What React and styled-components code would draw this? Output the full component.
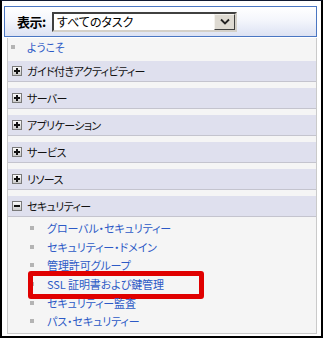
import React from "react";
import styled, { createGlobalStyle } from "styled-components";

const Global = createGlobalStyle`
  html, body { margin: 0; padding: 0; background: #fff; }
  body { font-family: "Noto Sans CJK JP", "Noto Sans", sans-serif; }
  * { box-sizing: border-box; }
`;

const Frame = styled.div`
  width: 323px;
  height: 338px;
  border: 2px solid #000;
  border-top: 1px solid #101a33;
  background: #fff;
  display: flex;
  flex-direction: column;
`;

const Header = styled.div`
  margin: 5px 4px 0 2px;
  height: 31px;
  border: 1px solid #4a76c2;
  background: linear-gradient(#ffffff 0%, #f4f6fc 45%, #dce2f3 100%);
  display: flex;
  align-items: center;
  padding-left: 12px;
`;

const Label = styled.span`
  font-size: 13px;
  font-weight: bold;
  color: #000;
  width: 35px;
  letter-spacing: -0.5px;
`;

const Select = styled.div`
  width: 185px;
  height: 20px;
  border-style: solid;
  border-width: 2px;
  border-color: #404040 #d4d0c8 #d4d0c8 #404040;
  background: #fff;
  display: flex;
  align-items: center;
  justify-content: space-between;
  padding-left: 3px;
  font-size: 12px;
  font-feature-settings: "palt";
  color: #000;
`;

const DropButton = styled.div`
  width: 21px;
  height: 16px;
  background: #dedad2;
  border-style: solid;
  border-width: 1px;
  border-color: #f4f2ee #404040 #404040 #f4f2ee;
  display: flex;
  align-items: center;
  justify-content: center;
`;

const Panel = styled.div`
  margin: 1px 4px 2px 5px;
  flex: 1;
  background: #f5f5f5;
  border: 1px solid #cacaca;
  border-top: none;
  display: flex;
  flex-direction: column;
`;

const LinkItem = styled.div`
  position: relative;
  height: ${(p) => p.$h}px;
  display: flex;
  align-items: center;
  padding-left: ${(p) => p.$indent}px;
  font-size: 11px;
  font-feature-settings: "palt";
  color: #2d5ac6;
  letter-spacing: -0.1px;
  white-space: nowrap;
`;

const Bullet = styled.span`
  width: 4px;
  height: 4px;
  background: #b4b4b4;
  margin-right: ${(p) => p.$gap}px;
  flex: none;
`;

const Rows = styled.div`
  margin-top: 5px;
  display: flex;
  flex-direction: column;
  gap: 6px;
`;

const Row = styled.div`
  height: 21px;
  background: #dfe0ee;
  border-bottom: 1px solid #c4c4ce;
  display: flex;
  align-items: center;
  padding-left: 4px;
  font-size: 11px;
  font-feature-settings: "palt";
  color: #111;
  letter-spacing: -0.6px;
  white-space: nowrap;
`;

const Toggle = styled.svg`
  width: 10px;
  height: 10px;
  margin-right: 5px;
  flex: none;
`;

const SubList = styled.div`
  margin-top: 1.6px;
  display: flex;
  flex-direction: column;
`;

const Highlight = styled.div`
  position: absolute;
  left: 20px;
  top: -4px;
  width: 176px;
  height: 28px;
  border: 5px solid #e00000;
  border-radius: 3px;
  pointer-events: none;
`;

function ToggleIcon({ open }) {
  return (
    <Toggle viewBox="0 0 10 10">
      <defs>
        <linearGradient id="tg" x1="0" y1="0" x2="0" y2="1">
          <stop offset="0" stopColor="#ffffff" />
          <stop offset="1" stopColor="#c8c8c8" />
        </linearGradient>
      </defs>
      <rect x="0.5" y="0.5" width="9" height="9" fill="url(#tg)" stroke="#7a7a7a" />
      <rect x="2" y="4" width="6" height="2" fill="#111" />
      {!open && <rect x="4" y="2" width="2" height="6" fill="#111" />}
    </Toggle>
  );
}

const sections = [
  "ガイド付きアクティビティー",
  "サーバー",
  "アプリケーション",
  "サービス",
  "リソース",
];

const security = [
  "グローバル・セキュリティー",
  "セキュリティー・ドメイン",
  "管理許可グループ",
  "SSL 証明書および鍵管理",
  "セキュリティー監査",
  "パス・セキュリティー",
];

export default function App() {
  return (
    <>
      <Global />
      <Frame>
        <Header>
          <Label>表示:</Label>
          <Select>
            <span>すべてのタスク</span>
            <DropButton>
              <svg width="10" height="7" viewBox="0 0 10 7">
                <path d="M1 1.5 L5 5.5 L9 1.5" fill="none" stroke="#222" strokeWidth="1.8" />
              </svg>
            </DropButton>
          </Select>
        </Header>
        <Panel>
          <LinkItem $h={18} $indent={3}>
            <Bullet $gap={12} />
            ようこそ
          </LinkItem>
          <Rows>
            {sections.map((s) => (
              <Row key={s}>
                <ToggleIcon />
                {s}
              </Row>
            ))}
            <Row>
              <ToggleIcon open />
              セキュリティー
            </Row>
          </Rows>
          <SubList>
            {security.map((s) => (
              <LinkItem key={s} $h={18.7} $indent={22}>
                <Bullet $gap={13} />
                {s}
                {s.startsWith("SSL") && <Highlight />}
              </LinkItem>
            ))}
          </SubList>
        </Panel>
      </Frame>
    </>
  );
}
